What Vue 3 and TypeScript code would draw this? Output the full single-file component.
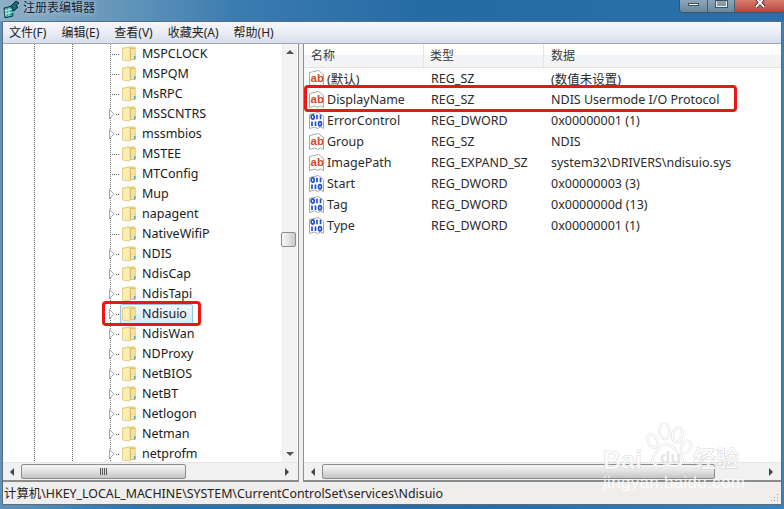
<script setup lang="ts">
interface TreeRow { name: string; arrow: boolean; selected?: boolean }
interface ValueRow { name: string; kind: 'sz' | 'bin'; type: string; data: string }

const menus: string[] = ['文件(F)', '编辑(E)', '查看(V)', '收藏夹(A)', '帮助(H)']

const tree: TreeRow[] = [
  { name: 'MSPCLOCK', arrow: false },
  { name: 'MSPQM', arrow: false },
  { name: 'MsRPC', arrow: false },
  { name: 'MSSCNTRS', arrow: true },
  { name: 'mssmbios', arrow: true },
  { name: 'MSTEE', arrow: false },
  { name: 'MTConfig', arrow: false },
  { name: 'Mup', arrow: true },
  { name: 'napagent', arrow: true },
  { name: 'NativeWifiP', arrow: false },
  { name: 'NDIS', arrow: true },
  { name: 'NdisCap', arrow: true },
  { name: 'NdisTapi', arrow: true },
  { name: 'Ndisuio', arrow: true, selected: true },
  { name: 'NdisWan', arrow: true },
  { name: 'NDProxy', arrow: true },
  { name: 'NetBIOS', arrow: true },
  { name: 'NetBT', arrow: true },
  { name: 'Netlogon', arrow: true },
  { name: 'Netman', arrow: true },
  { name: 'netprofm', arrow: true },
]

const values: ValueRow[] = [
  { name: '(默认)', kind: 'sz', type: 'REG_SZ', data: '(数值未设置)' },
  { name: 'DisplayName', kind: 'sz', type: 'REG_SZ', data: 'NDIS Usermode I/O Protocol' },
  { name: 'ErrorControl', kind: 'bin', type: 'REG_DWORD', data: '0x00000001 (1)' },
  { name: 'Group', kind: 'sz', type: 'REG_SZ', data: 'NDIS' },
  { name: 'ImagePath', kind: 'sz', type: 'REG_EXPAND_SZ', data: 'system32\\DRIVERS\\ndisuio.sys' },
  { name: 'Start', kind: 'bin', type: 'REG_DWORD', data: '0x00000003 (3)' },
  { name: 'Tag', kind: 'bin', type: 'REG_DWORD', data: '0x0000000d (13)' },
  { name: 'Type', kind: 'bin', type: 'REG_DWORD', data: '0x00000001 (1)' },
]
</script>

<template>
  <div class="win">
    <header class="title">
      <svg class="app-icon" width="19" height="19" viewBox="0 0 19 19">
        <path d="M2 8l8-2 1 10-8 2z" fill="#2fa6a0" stroke="#0d3d48" />
        <path d="M4 9v7M7 8v8M2.500 11l8-2M3 14l8-2" stroke="#b6f0e6" stroke-width="1" />
        <path d="M9 6l5-5 3 2-3 3 2 1-4 4z" fill="#1b6a78" stroke="#0b2f3a" />
      </svg>
      <span class="title-text">注册表编辑器</span>
      <div class="controls">
        <div class="ctl min"><i></i></div>
        <div class="ctl max"><i></i></div>
        <div class="ctl close">
          <svg width="14" height="8" viewBox="0 0 14 8">
            <path d="M3 -2l8 9M11 -2l-8 9" stroke="#4a1a14" stroke-width="3.500" />
            <path d="M3 -2l8 9M11 -2l-8 9" stroke="#fff" stroke-width="2" />
          </svg>
        </div>
      </div>
    </header>

    <div class="frame">
      <nav class="menu">
        <span v-for="m in menus" :key="m" class="menu-item">{{ m }}</span>
      </nav>

      <div class="panes">
        <section class="left">
          <div class="left-top">
            <div class="tree">
              <div v-for="r in tree" :key="r.name" class="tree-row">
                <svg v-if="r.arrow" class="arrow" width="6" height="10" viewBox="0 0 6 10">
                  <path d="M.5.500L5 5 .5 9.500z" fill="#fff" stroke="#a6a6a6" />
                </svg>
                <span v-else class="arrow-gap"></span>
                <span class="dash" :class="{ long: !r.arrow }"></span>
                <div class="node" :class="{ sel: r.selected }">
                  <svg class="folder" width="14" height="16" viewBox="0 0 14 16">
                    <path d="M0 1.500h4l1-1h8.500v13H0z" fill="#e9d27f" />
                    <path d="M.5 2.500L8 1v14l-7.500-1z" fill="#f9eeb4" stroke="#e5cf85" />
                    <path d="M8 2h5.500v12H8z" fill="#dcc06a" />
                    <path d="M9 3h4v10H9z" fill="#f3e29b" />
                    <rect x="12" y="10" width="1.500" height="3" fill="#59a9d8" />
                  </svg>
                  <span class="node-text">{{ r.name }}</span>
                </div>
              </div>
            </div>
            <div class="vscroll">
              <span class="tri-up"></span>
              <div class="vspacer top"></div>
              <div class="vthumb"></div>
              <div class="vspacer"></div>
              <span class="tri-down"></span>
            </div>
          </div>
          <div class="hscroll left-h">
            <span class="tri-left"></span>
            <div class="hthumb left-thumb"><span class="grip"><i></i><i></i><i></i><i></i></span></div>
            <div class="hfill"></div>
            <span class="tri-right"></span>
          </div>
        </section>

        <div class="split"></div>

        <section class="right">
          <div class="list">
            <div class="list-head">
              <div class="col c1">名称</div>
              <div class="col c2">类型</div>
              <div class="col c3">数据</div>
            </div>
            <div v-for="v in values" :key="v.name" class="list-row">
              <div class="c1 name-cell">
                <svg class="reg" width="16" height="18" viewBox="0 0 16 18">
                  <path d="M.5 2.500l9-2 5 4v12l-3-1.500-3 1.500-3-1.500-5 1.500z" fill="#fff" stroke="#a8a8a8" />
                  <text v-if="v.kind === 'sz'" x="1.500" y="11.500" class="ab">ab</text>
                  <g v-else fill="none" stroke="#1f4fd0" stroke-width="1.700">
                    <ellipse cx="3.700" cy="5" rx="1.500" ry="2.200" />
                    <path d="M8 2.700v4.600M11.500 2.700v4.600" />
                    <path d="M3 9.500v4.600M6.500 9.500v4.600" />
                    <ellipse cx="11" cy="11.800" rx="1.500" ry="2.200" />
                  </g>
                </svg>
                <span>{{ v.name }}</span>
              </div>
              <div class="c2 cell">{{ v.type }}</div>
              <div class="c3 cell">{{ v.data }}</div>
            </div>
          </div>
          <div class="hscroll right-h">
            <span class="tri-left"></span>
            <div class="hthumb right-thumb"></div>
            <div class="hfill"></div>
            <span class="tri-right"></span>
          </div>
        </section>
      </div>

      <footer class="status">
        <span>计算机\HKEY_LOCAL_MACHINE\SYSTEM\CurrentControlSet\services\Ndisuio</span>
        <svg class="sizer" width="8" height="8" viewBox="0 0 8 8" fill="#9a9a9a">
          <rect x="6" y="0" width="1" height="1" /><rect x="3" y="3" width="1" height="1" /><rect x="6" y="3" width="1" height="1" />
          <rect x="0" y="6" width="1" height="1" /><rect x="3" y="6" width="1" height="1" /><rect x="6" y="6" width="1" height="1" />
        </svg>
      </footer>
    </div>

    <div class="mark mark-tree"></div>
    <div class="mark mark-list"></div>

    <div class="wm">
      <svg class="paw" width="60" height="48" viewBox="0 0 120 96" fill="none" stroke="#fff" stroke-width="3">
        <g stroke="#dcdcdc" stroke-width="5">
          <ellipse cx="23" cy="36" rx="9" ry="14" transform="rotate(-22 23 36)" />
          <ellipse cx="47" cy="17" rx="10" ry="15" transform="rotate(-6 47 17)" />
          <ellipse cx="73" cy="24" rx="10" ry="15" transform="rotate(14 73 24)" />
          <ellipse cx="90" cy="48" rx="9" ry="13" transform="rotate(24 90 48)" />
          <path d="M50 42c12 0 18 12 28 22 10 10 2 24-12 22-8-1-14-3-22 0-14 4-26-8-18-20 8-10 10-24 24-24z" />
        </g>
        <ellipse cx="23" cy="36" rx="9" ry="14" transform="rotate(-22 23 36)" />
        <ellipse cx="47" cy="17" rx="10" ry="15" transform="rotate(-6 47 17)" />
        <ellipse cx="73" cy="24" rx="10" ry="15" transform="rotate(14 73 24)" />
        <ellipse cx="90" cy="48" rx="9" ry="13" transform="rotate(24 90 48)" />
        <path d="M50 42c12 0 18 12 28 22 10 10 2 24-12 22-8-1-14-3-22 0-14 4-26-8-18-20 8-10 10-24 24-24z" />
      </svg>
      <span class="wm-bai">Bai</span>
      <span class="wm-du">du</span>
      <span class="wm-cn">经验</span>
      <span class="wm-url">jingyan.baidu.com</span>
    </div>
  </div>
</template>

<style>
html, body { margin: 0; padding: 0; }
</style>

<style scoped>
.win {
  position: relative;
  width: 784px;
  height: 509px;
  overflow: hidden;
  display: flex;
  flex-direction: column;
  font-family: "Noto Sans", "Noto Sans CJK SC", sans-serif;
  font-size: 12px;
  color: #1a1a1a;
  background: linear-gradient(90deg, #5f93b8 0, #2d74ad 18%, #266ba6 60%, #3a82b8 100%);
}
.title {
  height: 21px;
  flex: none;
  display: flex;
  align-items: center;
  padding-left: 2px;
  background: linear-gradient(90deg, #8fb0c8 0, #6d9bbd 12%, #3b7cb0 30%, #246aa5 55%, #2a70aa 100%);
}
.app-icon { margin-right: 2px; margin-top: -2px; }
.title-text { font-size: 12px; color: #16222c; margin-top: -8px; text-shadow: 0 0 5px rgba(255,255,255,.7); }
.controls {
  margin-left: auto;
  margin-right: -1px;
  align-self: flex-start;
  display: flex;
  height: 12px;
  border: 1px solid #3a5468;
  border-top: 0;
  border-radius: 0 0 4px 4px;
  overflow: hidden;
}
.ctl { height: 12px; display: flex; justify-content: center; position: relative; }
.min { width: 27px; background: linear-gradient(#8da6b9, #6a889f); border-right: 1px solid #4a6070; }
.min i { width: 11px; height: 3px; margin-top: 3px; background: #fff; border: 1px solid #40505c; box-sizing: border-box; }
.max { width: 26px; background: linear-gradient(#8da6b9, #6a889f); border-right: 1px solid #4a6070; }
.max i { width: 9px; height: 6px; background: transparent; border: 2px solid #eef2f4; border-top: 0; outline: 1px solid #40505c; outline-offset: -1px; }
.close { width: 49px; background: linear-gradient(#d77b6f, #b8473c); }

.frame {
  flex: 1;
  margin: 0 2px 4px;
  border: 1px solid #5b6d7c;
  border-radius: 1px 1px 0 0;
  background: #f0f0f0;
  display: flex;
  flex-direction: column;
  min-height: 0;
}
.menu {
  height: 22px;
  flex: none;
  display: flex;
  align-items: center;
  padding: 0 0 2px 6px;
  box-sizing: border-box;
  gap: 15px;
  background: linear-gradient(#f6f7fb, #eaedf5 50%, #d8deee);
  border-bottom: 1px solid #a4a8b0;
  font-size: 12px;
  color: #222;
}
.panes { flex: 1; display: flex; min-height: 0; background: #f0f0f0; }
.left { width: 295px; flex: none; display: flex; flex-direction: column; border-right: 1px solid #8f8f8f; }
.left-top { flex: 1; display: flex; min-height: 0; background: #fff; }
.tree {
  flex: 1;
  overflow: hidden;
  padding-left: 106px;
  background-color: #fff;
  background-image:
    repeating-linear-gradient(#666 0 1px, transparent 1px 2px),
    repeating-linear-gradient(#666 0 1px, transparent 1px 2px),
    repeating-linear-gradient(#777 0 1px, transparent 1px 2px);
  background-size: 1px 100%;
  background-repeat: no-repeat;
  background-position: 31px 0, 69px 0, 107px 0;
}
.tree-row { height: 20px; display: flex; align-items: center; }
.arrow { flex: none; width: 6px; margin-right: 1px; }
.arrow-gap { width: 2px; margin-right: 5px; flex: none; }
.dash {
  flex: none;
  width: 3px;
  height: 1px;
  margin-right: 2px;
  background-image: repeating-linear-gradient(90deg, #666 0 1px, transparent 1px 2px);
}
.dash.long { margin-left: -6px; width: 9px; }
.node {
  display: flex;
  align-items: center;
  height: 18px;
  padding: 0 5px 0 1px;
  border: 1px solid transparent;
  border-radius: 2px;
  margin-left: -1px;
}
.node.sel { background: linear-gradient(#f2f8fe, #d7e9fb); border-color: #99c4ea; }
.folder { flex: none; margin-right: 6px; }
.node-text { font-size: 12.500px; color: #1a1a1a; white-space: nowrap; line-height: 16px; }

.vscroll {
  width: 15px;
  flex: none;
  margin-right: 1px;
  background: #f3f3f3;
  display: flex;
  flex-direction: column;
  align-items: center;
  padding-top: 6px;
  box-sizing: border-box;
  border-left: 1px solid #ececec;
}
.vspacer { flex: 1; }
.vspacer.top { flex: none; height: 178px; }
.vthumb {
  width: 15px;
  height: 15px;
  flex: none;
  box-sizing: border-box;
  border: 1px solid #8c8c8c;
  border-radius: 2px;
  background: linear-gradient(90deg, #f4f4f4, #e8e8e8 40%, #c9c9c9);
  margin-left: -3px;
}
.tri-up, .tri-down, .tri-left, .tri-right { width: 0; height: 0; flex: none; border-style: solid; border-color: transparent; }
.tri-up { border-width: 0 4px 4px; border-bottom-color: #555; }
.tri-down { border-width: 4px 4px 0; border-top-color: #555; margin-bottom: 6px; }
.tri-left { border-width: 4px 4px 4px 0; border-right-color: #444; margin: 0 7px 0 7px; }
.tri-right { border-width: 4px 0 4px 4px; border-left-color: #444; margin: 0 9px 0 7px; }

.hscroll {
  height: 17px;
  flex: none;
  display: flex;
  align-items: center;
  background: #f1f1f1;
  border-top: 1px solid #e6e6e6;
  border-bottom: 2px solid #8b8b8b;
}
.hthumb {
  height: 15px;
  box-sizing: border-box;
  border: 1px solid #8c8c8c;
  border-radius: 2px;
  background: linear-gradient(#f5f5f5, #e4e4e4 45%, #c4c4c4);
  flex: none;
  display: flex;
  align-items: center;
  justify-content: center;
}
.left-thumb { width: 165px; }
.right-thumb { width: 393px; }
.grip { display: flex; gap: 1px; }
.grip i { width: 1px; height: 7px; background: #555; }
.hfill { flex: 1; }

.split { width: 4px; flex: none; background: #f0f0f0; }
.right { flex: 1; display: flex; flex-direction: column; min-width: 0; border-left: 1px solid #8f8f8f; }
.list { flex: 1; background: #fff; min-height: 0; overflow: hidden; }
.list-head {
  display: flex;
  height: 24px;
  align-items: center;
  background: linear-gradient(#fff 0, #fff 50%, #f3f4f6 50%, #f3f4f6 100%);
  border-bottom: 1px solid #e2e3e6;
  box-sizing: border-box;
}
.col { height: 100%; display: flex; align-items: center; box-sizing: border-box; border-right: 1px solid #e3e4e8; padding: 0 0 2px 7px; color: #3a3a3a; font-size: 12px; }
.col.c2 { padding-left: 6px; }
.col.c3 { border-right: 0; padding-left: 7px; }
.c1 { width: 120px; flex: none; box-sizing: border-box; }
.c2 { width: 120px; flex: none; box-sizing: border-box; }
.c3 { flex: 1; }
.list-row { display: flex; height: 21px; align-items: center; font-size: 12.500px; color: #2b2b2b; }
.name-cell { display: flex; align-items: center; padding-left: 5px; white-space: nowrap; }
.reg { flex: none; margin-right: 2px; }
.ab { font: 700 11.500px "Liberation Sans", sans-serif; fill: #d8481f; }
.cell { padding-left: 7px; white-space: nowrap; }
.right-h .tri-right { margin-right: 8px; }

.status {
  height: 22px;
  flex: none;
  display: flex;
  align-items: center;
  justify-content: space-between;
  padding-left: 1px;
  background: #f0eeec;
  font-size: 12.400px;
  color: #222;
}
.sizer { margin-right: 2px; align-self: flex-end; margin-bottom: 2px; }

.mark {
  position: absolute;
  box-sizing: border-box;
  border: 3px solid #f01414;
  border-radius: 4px;
  pointer-events: none;
}
.mark-tree { left: 102px; top: 301px; width: 99px; height: 25px; }
.mark-list { left: 304px; top: 85px; width: 433px; height: 27px; }

.wm { position: absolute; left: 600px; top: 422px; width: 184px; height: 87px; pointer-events: none; color: rgba(255,255,255,.8); }
.paw { position: absolute; left: 41px; top: 1px; }
.wm-bai { position: absolute; left: 3px; top: 23px; font: 700 25px/30px "Liberation Sans", sans-serif; color: rgba(255,255,255,.85); -webkit-text-stroke: .6px rgba(205,205,205,.75); }
.wm-du { position: absolute; left: 60px; top: 27px; font: 700 17px/18px "Liberation Sans", sans-serif; color: rgba(225,225,225,.85); }
.wm-cn { position: absolute; left: 93px; top: 20px; font: 700 23px/30px "Noto Sans CJK SC", sans-serif; color: rgba(255,255,255,.85); -webkit-text-stroke: .6px rgba(205,205,205,.75); white-space: nowrap; }
.wm-url { position: absolute; left: 3px; top: 51px; font: 400 17px/20px "Liberation Sans", sans-serif; letter-spacing: .3px; color: rgba(255,255,255,.85); white-space: nowrap; }
</style>
